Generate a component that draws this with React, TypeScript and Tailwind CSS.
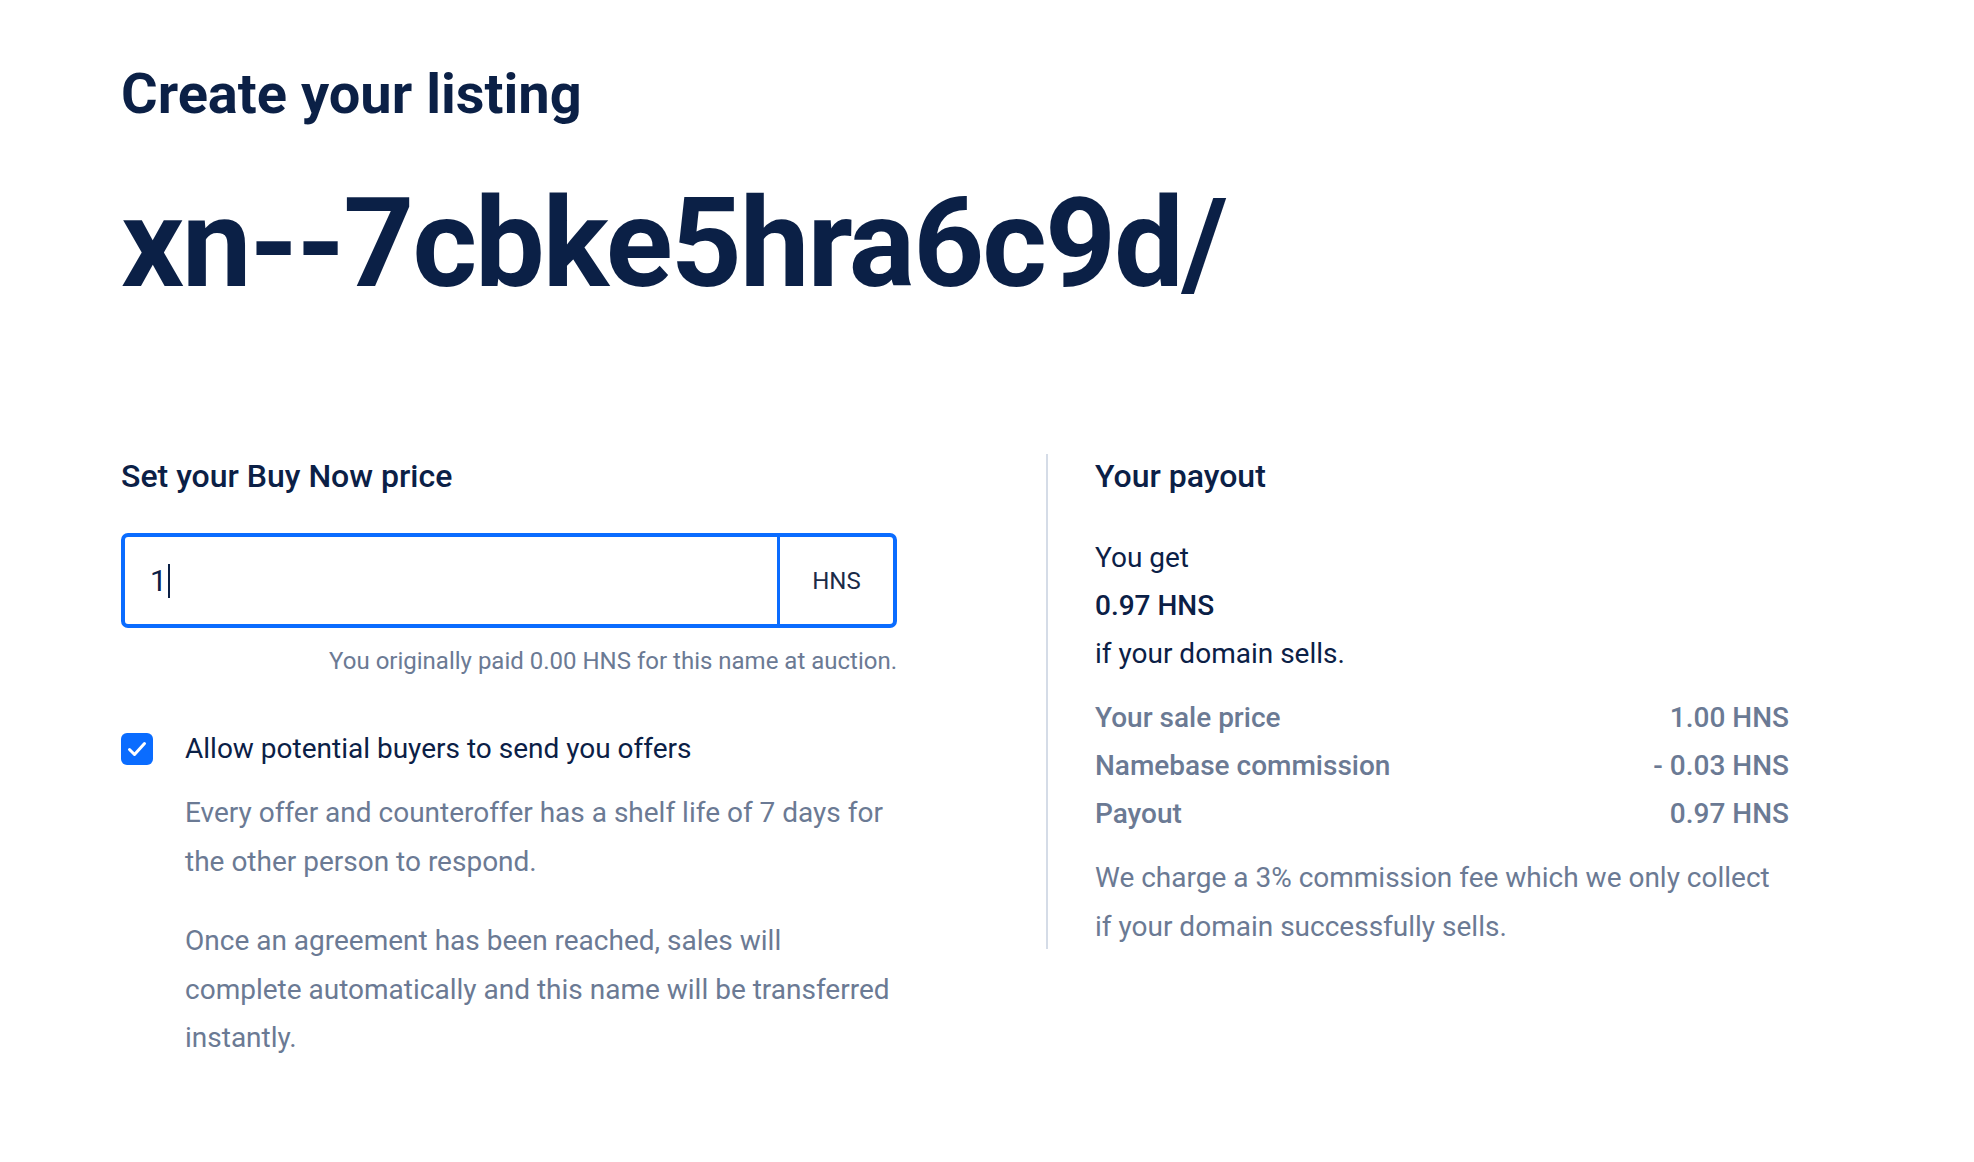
import React from "react";

export default function App() {
  return (
    <div className="min-h-screen w-full bg-white font-['Roboto',sans-serif] text-[#0b2046]">
      <div className="pl-[121px] pt-[61px]">
        <h1 className="text-[56px] font-bold leading-[67px] tracking-[0px]">Create your listing</h1>
        <h2 className="mt-[54px] text-[124px] font-bold leading-[124px] tracking-[-2px]">xn--7cbke5hra6c9d/</h2>

        <div className="mt-[148px] flex items-start">
          {/* Left column */}
          <div className="w-[776px]">
            <div className="text-[32px] font-medium leading-[44px]">Set your Buy Now price</div>
            <div className="mt-[35px] flex h-[95px] overflow-hidden rounded-[7px] border-[4px] border-[#0a6cff]">
              <div className="flex flex-1 items-center pl-[25px] text-[30px] text-[#0b2046]">
                <span>1</span>
                <span className="ml-[1px] inline-block h-[34px] w-[2px] bg-[#0b2046]"></span>
              </div>
              <div className="flex w-[116px] items-center justify-center border-l-[3px] border-[#0a6cff] text-[24px] text-[#1b2b48]">
                HNS
              </div>
            </div>
            <div className="mt-[18px] text-right text-[24px] leading-[30px] text-[#6b7a94]">
              You originally paid 0.00 HNS for this name at auction.
            </div>

            <div className="mt-[49px] flex items-center">
              <div className="flex h-[32px] w-[32px] items-center justify-center rounded-[6px] bg-[#0a6cff]">
                <svg width="32" height="32" viewBox="0 0 32 32" fill="none">
                  <path d="M8.5 16.5l5 5 10-11" stroke="white" strokeWidth="3" strokeLinecap="round" strokeLinejoin="round" />
                </svg>
              </div>
              <div className="ml-[32px] text-[28px] leading-[48px]">Allow potential buyers to send you offers</div>
            </div>
            <div className="w-[780px] pl-[64px] text-[28px] leading-[48.5px] text-[#6b7a94]">
              <p className="mt-[16px] w-[714px]">Every offer and counteroffer has a shelf life of 7 days for the other person to respond.</p>
              <p className="mt-[31px] w-[714px]">
                Once an agreement has been reached, sales will complete automatically and this name will be transferred instantly.
              </p>
            </div>
          </div>

          {/* Divider */}
          <div className="ml-[149px] h-[495px] w-[2px] shrink-0 bg-[#d5dce7]"></div>

          {/* Right column */}
          <div className="box-content w-[694px] pl-[47px]">
            <div className="text-[32px] font-medium leading-[44px]">Your payout</div>
            <div className="mt-[36px] text-[28px] leading-[48px]">
              <div>You get</div>
              <div className="font-medium">0.97 HNS</div>
              <div>if your domain sells.</div>
            </div>
            <div className="mt-[16px] text-[28px] font-medium leading-[48px] text-[#6b7a94]">
              <div className="flex justify-between">
                <span>Your sale price</span>
                <span>1.00 HNS</span>
              </div>
              <div className="flex justify-between">
                <span>Namebase commission</span>
                <span>- 0.03 HNS</span>
              </div>
              <div className="flex justify-between">
                <span>Payout</span>
                <span>0.97 HNS</span>
              </div>
            </div>
            <p className="mt-[16px] text-[28px] leading-[48.5px] text-[#6b7a94]">
              We charge a 3% commission fee which we only collect if your domain successfully sells.
            </p>
          </div>
        </div>
      </div>
    </div>
  );
}
